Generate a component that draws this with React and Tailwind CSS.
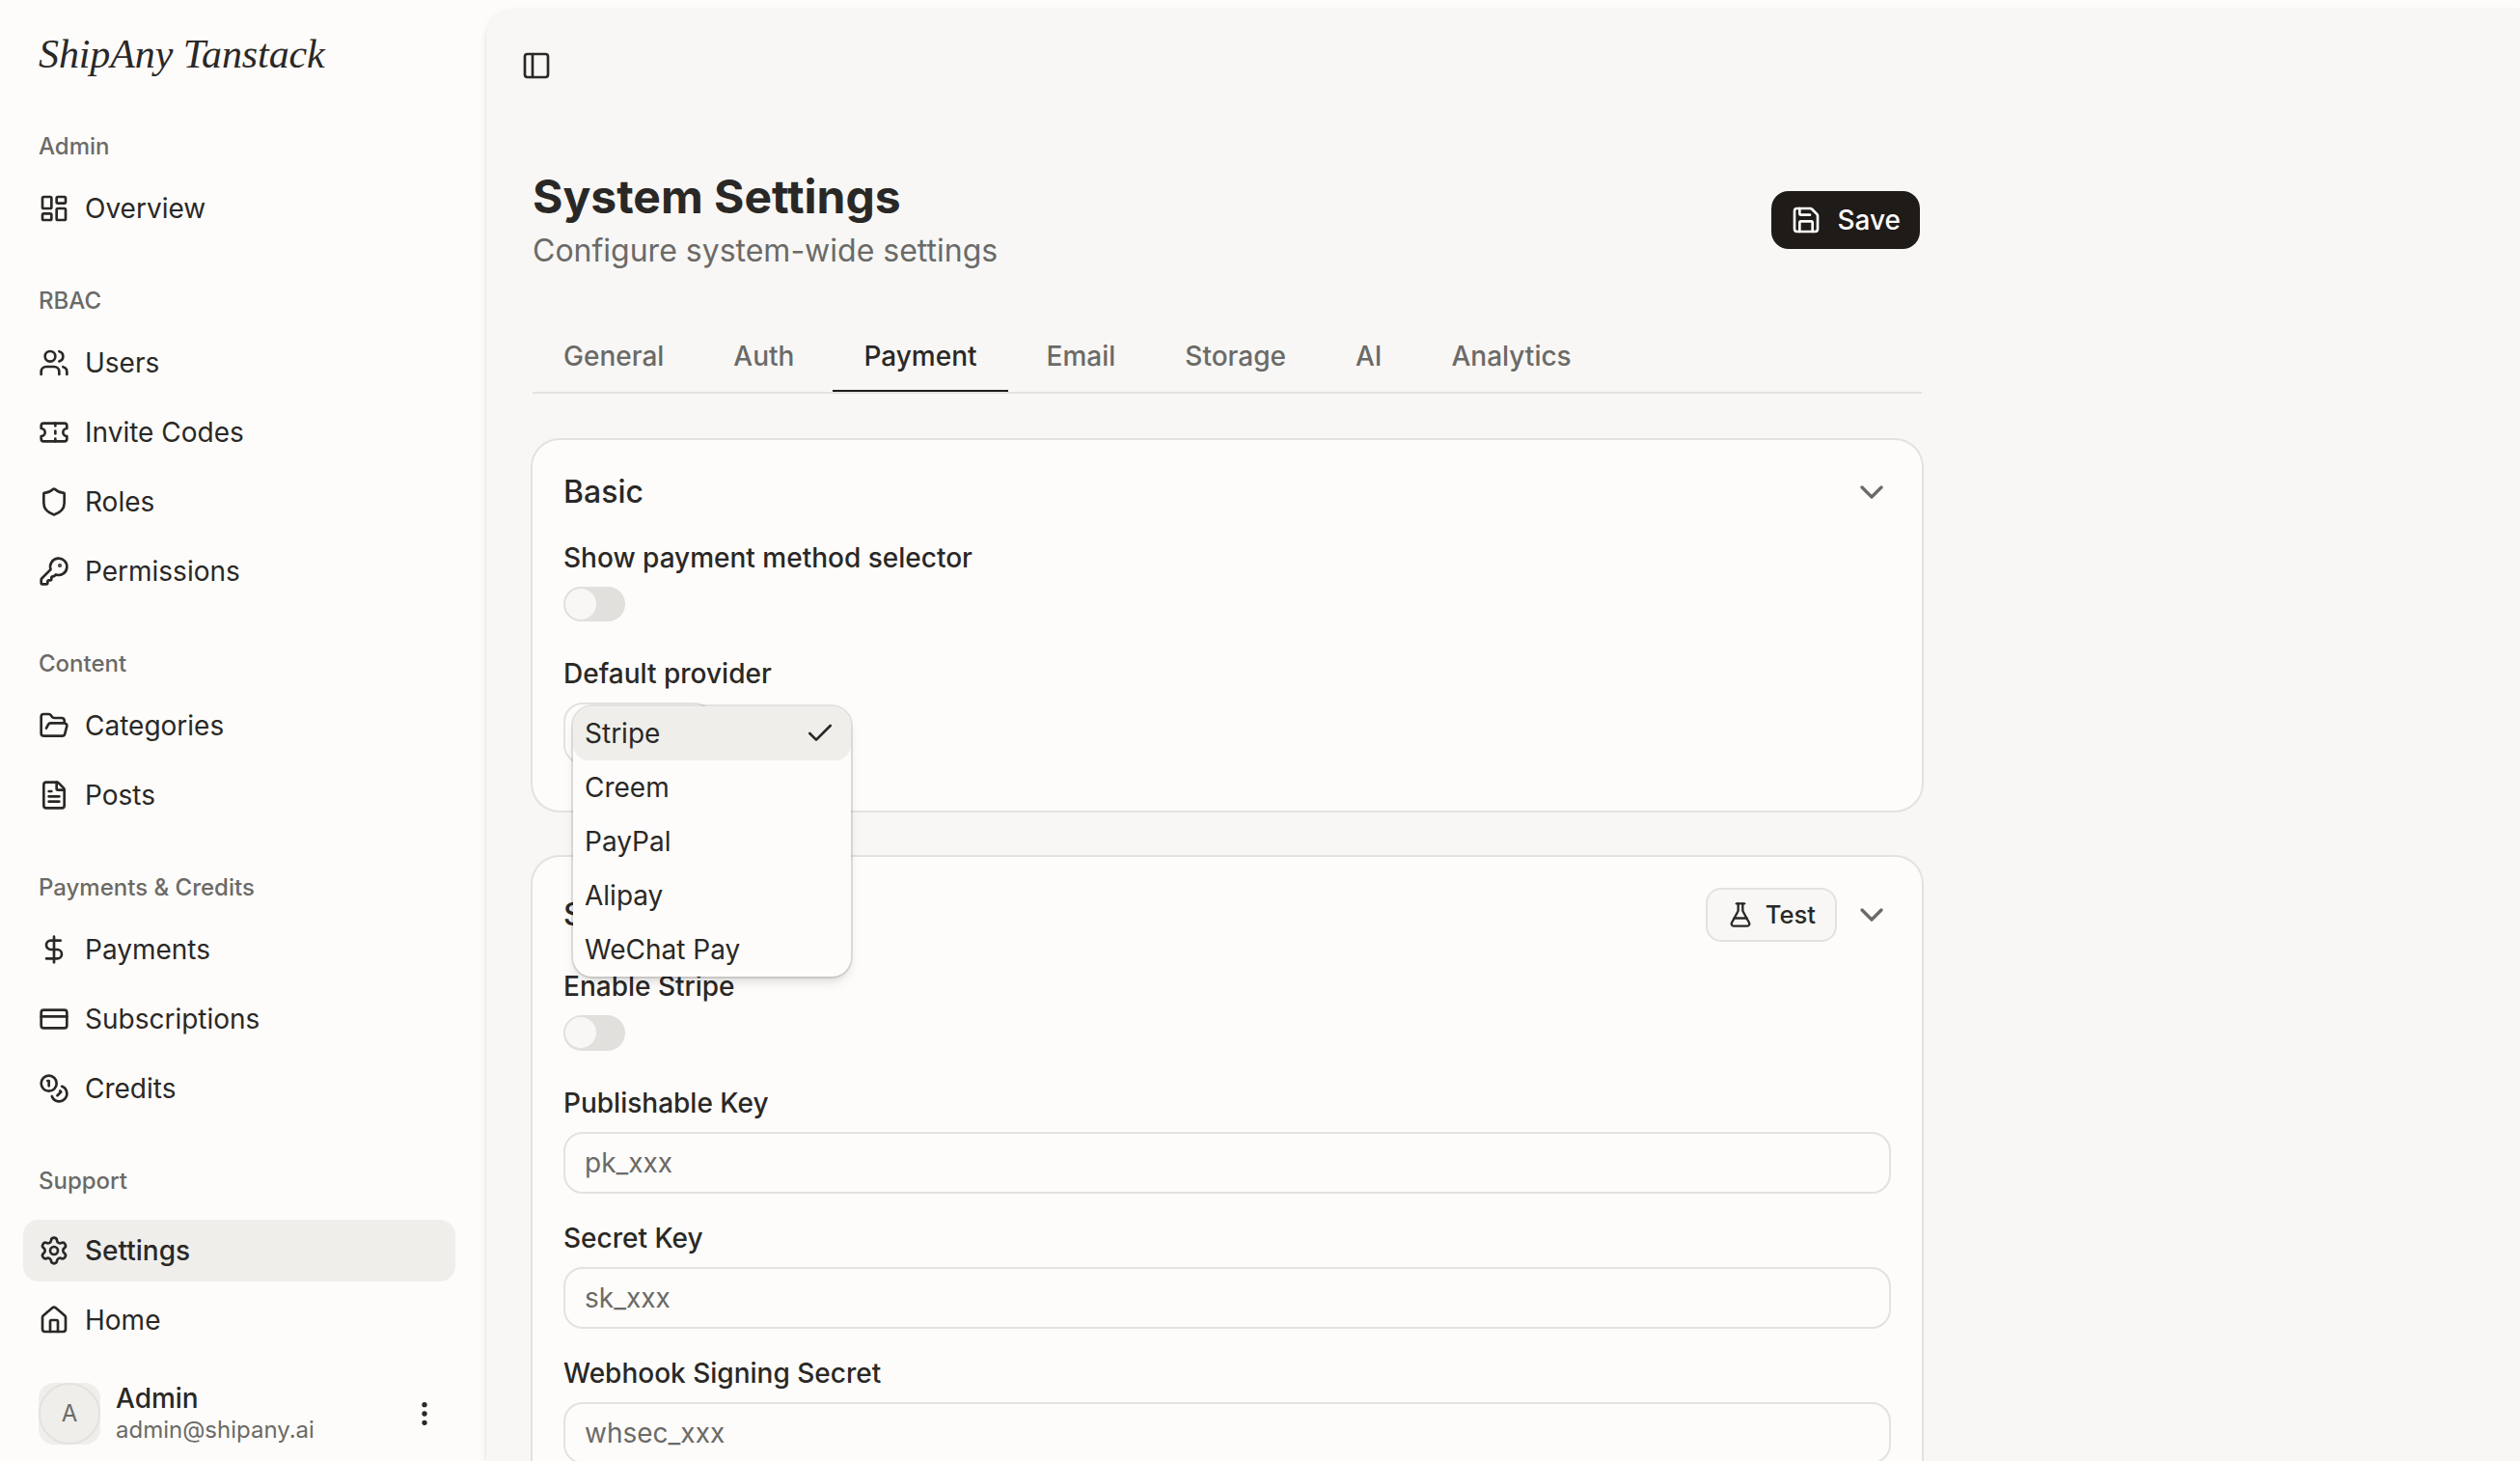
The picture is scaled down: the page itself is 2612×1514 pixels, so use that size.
import React from 'react';
import {
  Check,
  ChevronDown,
  Coins,
  CreditCard,
  DollarSign,
  EllipsisVertical,
  FileText,
  FlaskConical,
  FolderOpen,
  House,
  KeyRound,
  LayoutDashboard,
  PanelLeft,
  Save,
  Settings,
  Shield,
  Ticket,
  Users,
} from 'lucide-react';

const navGroups = [
  { label: 'Admin', items: [{ title: 'Overview', icon: LayoutDashboard }] },
  {
    label: 'RBAC',
    items: [
      { title: 'Users', icon: Users },
      { title: 'Invite Codes', icon: Ticket },
      { title: 'Roles', icon: Shield },
      { title: 'Permissions', icon: KeyRound },
    ],
  },
  {
    label: 'Content',
    items: [
      { title: 'Categories', icon: FolderOpen },
      { title: 'Posts', icon: FileText },
    ],
  },
  {
    label: 'Payments & Credits',
    items: [
      { title: 'Payments', icon: DollarSign },
      { title: 'Subscriptions', icon: CreditCard },
      { title: 'Credits', icon: Coins },
    ],
  },
];

const supportItems = [
  { title: 'Settings', icon: Settings, active: true },
  { title: 'Home', icon: House },
];

const tabs = ['General', 'Auth', 'Payment', 'Email', 'Storage', 'AI', 'Analytics'];

const providers = ['Stripe', 'Creem', 'PayPal', 'Alipay', 'WeChat Pay'];

const NavItem = ({ title, icon: Icon, active }) => (
  <a
    className={`flex h-16 items-center gap-4 rounded-2xl px-4 ${
      active ? 'bg-[#efeeeb] font-medium' : ''
    }`}
  >
    <Icon className="size-8 shrink-0" />
    <span>{title}</span>
  </a>
);

const NavLabel = ({ children }) => (
  <div className="flex h-16 items-center px-4 text-2xl font-medium text-[#6b6a67]">{children}</div>
);

const Sidebar = () => (
  <aside className="flex h-full w-[504px] shrink-0 flex-col pl-6 pr-8">
    <div className="flex h-26 items-center px-4 pt-2">
      <span className="whitespace-nowrap font-['Liberation_Serif',serif] text-[42px] italic leading-none tracking-[-0.1px]">
        ShipAny Tanstack
      </span>
    </div>

    {navGroups.map((group) => (
      <div key={group.label} className="py-4">
        <NavLabel>{group.label}</NavLabel>
        <nav className="flex flex-col gap-2">
          {group.items.map((item) => (
            <NavItem key={item.title} {...item} />
          ))}
        </nav>
      </div>
    ))}

    <div className="pt-4">
      <NavLabel>Support</NavLabel>
      <nav className="mt-2 flex flex-col gap-2">
        {supportItems.map((item) => (
          <NavItem key={item.title} {...item} />
        ))}
      </nav>
    </div>

    <div className="mt-8 flex items-center px-4">
      <div className="size-16 rounded-2xl bg-[#efeeeb]">
        <div className="flex size-16 items-center justify-center rounded-full border-2 border-[#e3e2df] text-2xl text-[#6b6a67]">
          A
        </div>
      </div>
      <div className="ml-4 flex flex-1 flex-col">
        <span className="text-[28px] font-medium leading-[35px]">Admin</span>
        <span className="text-2xl leading-[30px] text-[#6b6a67]">admin@shipany.ai</span>
      </div>
      <EllipsisVertical className="size-8" />
    </div>
  </aside>
);

const Switch = () => (
  <div className="mb-2 h-[36.8px] w-16 rounded-full bg-[#e1e0dd] p-0.5">
    <div className="size-8 rounded-full bg-[#f8f7f5]" />
  </div>
);

const Field = ({ label, children }) => (
  <div className="flex flex-col gap-2">
    <label className="text-[28px] font-medium leading-[44px]">{label}</label>
    {children}
  </div>
);

const TextField = ({ label, placeholder }) => (
  <Field label={label}>
    <input
      className="h-16 w-full rounded-[20px] border-2 border-[#e3e2df] bg-transparent px-5 text-[28px] outline-none placeholder:text-[#6b6a67]"
      placeholder={placeholder}
    />
  </Field>
);

const ProviderMenu = () => (
  <div className="absolute left-[10px] top-1 z-10 w-72 overflow-hidden rounded-[20px] bg-[#fdfcfa] shadow-[0_8px_12px_-2px_rgb(0_0_0/0.1),0_4px_8px_-4px_rgb(0_0_0/0.1)] ring-2 ring-[#2a2826]/12">
    {providers.map((name, index) => (
      <div
        key={name}
        className={`flex h-14 items-center justify-between rounded-2xl pl-3 pr-4 text-[28px] ${
          index === 0 ? 'bg-[#efeeeb]' : ''
        }`}
      >
        {name}
        {index === 0 && <Check className="size-8" />}
      </div>
    ))}
  </div>
);

const App = () => {
  return (
    <div className="flex h-[1514px] w-full overflow-hidden bg-[#fdfcfa] font-['Inter',sans-serif] text-[28px] text-[#2a2826]">
      <Sidebar />

      <main className="mt-[10px] flex min-w-0 flex-1 flex-col rounded-tl-[28px] bg-[#f8f7f5] shadow-[0_2px_6px_rgb(0_0_0/0.1),0_2px_4px_-2px_rgb(0_0_0/0.1)]">
        <header className="flex h-[116px] shrink-0 items-center pl-9">
          <PanelLeft className="size-8" />
        </header>

        <div className="ml-12 w-[1440px]">
          <div className="flex items-center justify-between pt-[46px]">
            <div>
              <h1 className="text-5xl font-bold leading-[64px]">System Settings</h1>
              <p className="text-[32px] leading-[48px] text-[#6b6a67]">Configure system-wide settings</p>
            </div>
            <button className="flex h-16 items-center gap-4 rounded-[20px] border-2 border-transparent bg-[#1e1b18] bg-clip-padding px-5 font-medium text-[#fdfcfa]">
              <Save className="size-8" />
              Save
            </button>
          </div>

          <div className="mt-10 flex h-[84px] gap-2 border-b-2 border-[#e3e2df]">
            {tabs.map((tab) => (
              <button
                key={tab}
                className={`border-b-2 px-8 pt-[9px] font-medium ${
                  tab === 'Payment' ? 'border-[#1e1b18]' : 'border-transparent text-[#6b6a67]'
                }`}
              >
                {tab}
              </button>
            ))}
          </div>

          <section className="mt-12 h-[384px] rounded-[28px] bg-[#fdfcfa] p-8 ring-2 ring-[#e3e2df]">
            <div className="flex h-[43.5px] items-center justify-between">
              <h2 className="text-[32px] font-medium">Basic</h2>
              <ChevronDown className="size-10 text-[#6b6a67]" />
            </div>
            <div className="mt-6 flex flex-col gap-6">
              <Field label="Show payment method selector">
                <Switch />
              </Field>
              <Field label="Default provider">
                <div className="relative">
                  <div className="h-16 w-[156px] rounded-[20px] border-2 border-[#e3e2df]" />
                  <ProviderMenu />
                </div>
              </Field>
            </div>
          </section>

          <section className="mt-12 rounded-[28px] bg-[#fdfcfa] p-8 ring-2 ring-[#e3e2df]">
            <div className="flex h-14 items-center justify-between">
              <h2 className="text-[32px] font-medium">Stripe</h2>
              <div className="flex items-center gap-4">
                <button className="flex h-14 items-center gap-3 rounded-2xl border-2 border-[#e3e2df] bg-[#f8f7f5] px-5 text-[25.6px] font-medium">
                  <FlaskConical className="size-7" />
                  Test
                </button>
                <ChevronDown className="size-10 text-[#6b6a67]" />
              </div>
            </div>
            <div className="mt-6 flex flex-col gap-6">
              <Field label="Enable Stripe">
                <Switch />
              </Field>
              <TextField label="Publishable Key" placeholder="pk_xxx" />
              <TextField label="Secret Key" placeholder="sk_xxx" />
              <TextField label="Webhook Signing Secret" placeholder="whsec_xxx" />
            </div>
          </section>
        </div>
      </main>
    </div>
  );
};

export default App;
